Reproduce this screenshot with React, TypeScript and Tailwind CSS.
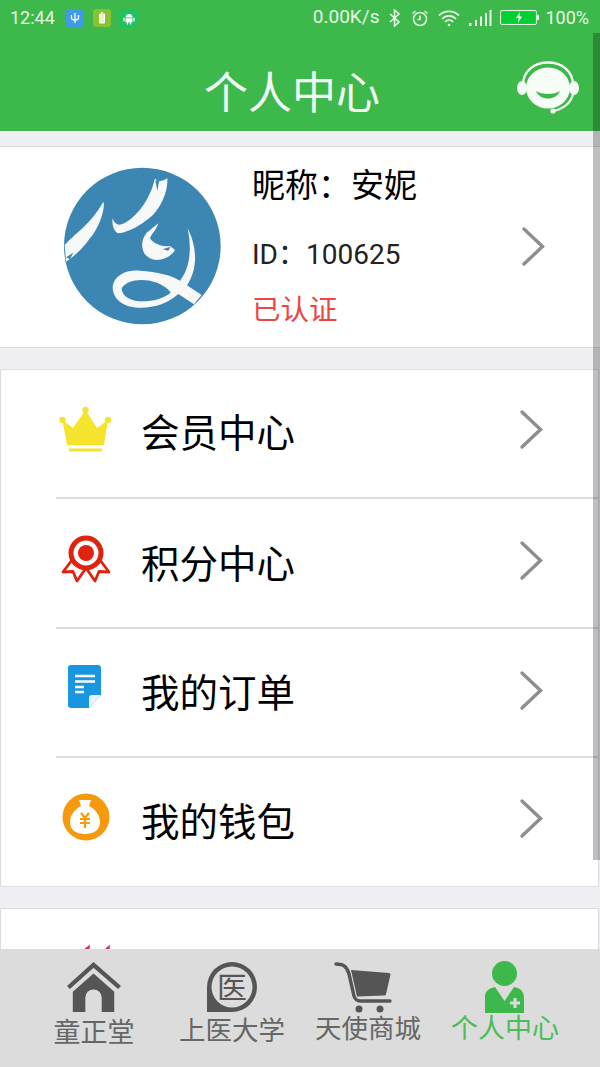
import { ReactNode } from "react";

const cjk = "font-['Noto_Sans_CJK_SC','Noto_Sans',sans-serif]";

const Chevron = () => (
  <svg width="26" height="42" viewBox="0 0 26 42" className="shrink-0">
    <path d="M3 3 L21.500 20.5 L3 38" fill="none" stroke="#8e8e8e" strokeWidth="3.4" strokeLinecap="round" strokeLinejoin="miter" />
  </svg>
);

const StatusTile = ({ color, children }: { color: string; children: ReactNode }) => (
  <div className={`w-[18px] h-[18px] rounded-[3px] flex items-center justify-center ${color}`}>
    <svg width="14" height="14" viewBox="0 0 14 14" fill="#fff" stroke="#fff">
      {children}
    </svg>
  </div>
);

const StatusBar = () => (
  <div className="h-[33px] pt-[2px] flex items-center justify-between pl-[10px] pr-[11px] text-[#e9f7e9] font-['Roboto',sans-serif] text-[18px]">
    <div className="flex items-center">
      <span className="w-[56px]">12:44</span>
      <div className="flex gap-[9px]">
        <StatusTile color="bg-[#3f9be8]">
          <path d="M7 2v10M3.5 4v3c0 1.5 1.5 2 3.5 2s3.500-.5 3.500-2V4" fill="none" strokeWidth="1.300" />
        </StatusTile>
        <StatusTile color="bg-[#86c231]">
          <path d="M4.500 3h5v9h-5z" strokeWidth="1" fill="#e8f5c8" />
          <path d="M6 1.500h2" strokeWidth="1.200" />
        </StatusTile>
        <StatusTile color="bg-[#1fc25e]">
          <path d="M3.500 6.500a3.500 3.500 0 0 1 7 0z" stroke="none" />
          <path d="M3.500 7.200h7v3.600a.7.7 0 0 1-.7.7H4.200a.7.7 0 0 1-.7-.7z" stroke="none" />
          <path d="M2 7v3M12 7v3M5.500 11v2M8.500 11v2" strokeWidth="1.200" strokeLinecap="round" />
        </StatusTile>
      </div>
    </div>
    <div className="flex items-center">
      <span className="mr-[9px] text-[19px]">0.00K/s</span>
      <svg width="14" height="18" viewBox="0 0 14 18" fill="none" stroke="#e9f7e9" strokeWidth="1.600" className="mr-[9px]">
        <path d="M2 5l9 8-4.500 4V1L11 5l-9 8" />
      </svg>
      <svg width="18" height="18" viewBox="0 0 18 18" fill="none" stroke="#e9f7e9" strokeWidth="1.500" className="mr-[9px]">
        <circle cx="9" cy="10" r="6.500" />
        <path d="M9 6.500V10.500H6.500M1.500 4.500L4.500 2M16.500 4.500L13.500 2" />
      </svg>
      <svg width="22" height="18" viewBox="0 0 22 18" fill="none" stroke="#e9f7e9" strokeWidth="1.700" className="mr-[8px]">
        <path d="M1 6.500a14 14 0 0 1 20 0M4 10a9.500 9.500 0 0 1 14 0M7 13a5 5 0 0 1 8 0" />
        <circle cx="11" cy="16" r="1.300" fill="#e9f7e9" stroke="none" />
      </svg>
      <svg width="24" height="18" viewBox="0 0 24 18" fill="#e9f7e9" className="mr-[8px]">
        <rect x="1" y="14" width="2.500" height="3" />
        <rect x="7" y="11" width="2" height="6" />
        <rect x="12" y="7.500" width="2" height="9.500" />
        <rect x="17" y="4" width="2" height="13" />
        <rect x="21.500" y="1" width="2" height="16" />
      </svg>
      <div className="relative w-[37px] h-[15px] border border-[#e9f7e9] rounded-[2px] p-px mr-[8px]">
        <div className="h-full w-full bg-[#00d130] flex items-center justify-center">
          <svg width="8" height="11" viewBox="0 0 8 11" fill="#fff">
            <path d="M5 0L1 6h2.500L3 11l4-6.500H4.500z" />
          </svg>
        </div>
        <div className="absolute -right-[3px] top-[4px] w-[2px] h-[5px] bg-[#e9f7e9]" />
      </div>
      <span>100%</span>
    </div>
  </div>
);

const Header = () => (
  <div className="h-[98px] relative flex items-center justify-center pt-[16px] pr-[16px]">
    <h1 className={`${cjk} font-normal text-[44px] leading-none text-[#f4fbf4]`}>个人中心</h1>
    <svg width="66" height="54" viewBox="0 0 66 54" className="absolute left-[515px] top-[28px]">
      <path d="M8 24 C8 -6 58 -6 58 24" fill="none" stroke="#f6fcf6" strokeWidth="2.300" />
      <ellipse cx="33" cy="27" rx="22" ry="20.500" fill="#f6fcf6" />
      <ellipse cx="7" cy="27" rx="5" ry="7" fill="#f6fcf6" />
      <ellipse cx="59" cy="27" rx="5" ry="7" fill="#f6fcf6" />
      <path d="M21 30 C25 40 41 40 45 30 C39 34 27 34 21 30Z" fill="#3cb94a" />
      <path d="M58 33 C56 42 50 47 39 50" fill="none" stroke="#f6fcf6" strokeWidth="2.200" />
      <circle cx="38" cy="50" r="2.600" fill="#f6fcf6" />
    </svg>
  </div>
);

const Avatar = () => (
  <svg width="200" height="190" viewBox="0 0 600 570" className="shrink-0 -mt-[4px]">
    <circle cx="307" cy="288" r="235" fill="#3b86b3" />
    <g fill="#f7f8f8">
      <path d="M74 285 C110 245 150 225 190 155 C197 170 180 230 150 265 C125 300 100 320 78 335 Z" />
      <path d="M218 205 C228 235 250 225 275 205 C310 175 335 130 345 85 C352 100 370 92 382 85 C385 130 355 190 320 210 C290 235 250 250 235 250 C222 245 215 225 218 205Z" />
      <path d="M355 220 C350 240 335 250 330 265 C340 282 370 292 390 288 L405 300 C390 325 350 340 325 322 C305 310 298 275 320 248 Z" />
      <path
        fillRule="evenodd"
        d="M218 410 C222 375 260 358 300 362 C350 365 395 375 425 395 L485 435 L462 463 L415 432 C385 460 340 475 295 473 C245 470 218 445 218 410Z M245 415 C255 395 290 385 330 392 C360 398 385 415 392 428 C365 450 320 458 285 452 C260 447 245 432 245 415Z"
      />
      <path d="M443 235 C468 285 478 350 440 408 L420 392 C445 360 458 310 443 235Z" />
    </g>
    <g fill="#3b86b3">
      <path d="M346 92 L358 90 L352 122Z" />
      <path d="M78 322 L100 308 L90 328Z" />
      <path d="M368 298 L392 290 L385 302Z" />
    </g>
  </svg>
);

const Crown = () => (
  <svg width="56" height="48" viewBox="0 0 56 48">
    <g fill="#f5e42e">
      <circle cx="4.500" cy="15" r="3.200" />
      <circle cx="27.500" cy="5" r="3.200" />
      <circle cx="50" cy="15" r="3.200" />
      <path d="M4.500 15L15 23 27.500 5 39 23 50 15 46 40H9z" />
      <rect x="11" y="43.500" width="33" height="3" />
    </g>
  </svg>
);

const Medal = () => (
  <svg width="50" height="48" viewBox="0 0 50 48">
    <path d="M11 25L2 37l10-.5 4 9.500 9-13M39 25l9 12-10-.5-4 9.500-9-13" fill="#fff" stroke="#e0230f" strokeWidth="2.800" strokeLinejoin="round" />
    <circle cx="25" cy="18" r="15" fill="#fff" stroke="#e0230f" strokeWidth="5" />
    <circle cx="25" cy="18" r="8" fill="#e0230f" />
  </svg>
);

const Doc = () => (
  <svg width="36" height="46" viewBox="0 0 36 46">
    <path d="M3 0h27a3 3 0 0 1 3 3v27L21 43H3a3 3 0 0 1-3-3V3a3 3 0 0 1 3-3z" fill="#1a96e1" />
    <path d="M7 11h20M7 16.500h20M7 22h9M7 27h9" stroke="#fff" strokeWidth="2.300" />
    <path d="M33 30h-9a3 3 0 0 0-3 3v10z" fill="#e6f3fb" />
  </svg>
);

const MoneyBag = () => (
  <svg width="48" height="48" viewBox="0 0 48 48">
    <circle cx="24" cy="24" r="23.500" fill="#f59a0c" />
    <path d="M17 7h12l-2 6c6 3 11 9 11 16 0 8-6 12-15 12S8 37 8 29c0-7 5-13 11-16z" fill="#fff" />
    <path d="M19 20l4 5 4-5M18 26h10M18 30h10M23 25v10" fill="none" stroke="#f59a0c" strokeWidth="2.200" />
  </svg>
);

const Home = () => (
  <svg width="54" height="52" viewBox="0 0 56 52" fill="#555">
    <path d="M0 25L27.500 0 56 25l-3 3L27.500 6 3 28z" />
    <path d="M6 31L27.500 12 49 31v21H36V37a8 8 0 0 0-17 0v15H6z" />
  </svg>
);

const Clinic = () => (
  <svg width="52" height="52" viewBox="0 0 52 52">
    <path d="M1 51V26a25 25 0 1 1 25 25z" fill="#555" />
    <circle cx="26" cy="26" r="20.500" fill="#dcdcdc" />
    <text x="26" y="37" textAnchor="middle" fontSize="30" fill="#555" fontFamily="Noto Sans CJK SC">医</text>
  </svg>
);

const Cart = () => (
  <svg width="58" height="52" viewBox="0 0 58 52">
    <path d="M2 3c8 0 11 3 13 10l5 22c1 3 3 5 6 5h30" fill="none" stroke="#555" strokeWidth="3.400" strokeLinecap="round" />
    <path d="M17 9l38 3c1 0 1.500 1 1.400 2L52 33c0 1-1 1.500-2 1.500l-27 1z" fill="#555" />
    <circle cx="25" cy="48" r="3.500" fill="#555" />
    <circle cx="46" cy="48" r="3.500" fill="#555" />
  </svg>
);

const Doctor = () => (
  <svg width="42" height="52" viewBox="0 0 42 52">
    <circle cx="20.500" cy="12.500" r="12.500" fill="#3cb94a" />
    <path d="M11 26L20.500 40 30 26c6 1 10 4 10 11v15H1V36c0-6 4-9 10-10z" fill="#3cb94a" />
    <path d="M31 37v10M26 42h10" stroke="#dcdcdc" strokeWidth="3" />
  </svg>
);

const rows = [
  { label: "会员中心", icon: <Crown />, iconClass: "pl-[57px] pb-[9px]", height: "h-[129px]", gap: "w-[27px]", nudge: "mb-[2px]", border: true },
  { label: "积分中心", icon: <Medal />, iconClass: "pl-[60px] pb-[6px]", height: "h-[130px]", gap: "w-[30px]", nudge: "mb-[4px]", border: true },
  { label: "我的订单", icon: <Doc />, iconClass: "pl-[67px] pb-[6px]", height: "h-[129px]", gap: "w-[37px]", nudge: "mb-[6px]", border: true },
  { label: "我的钱包", icon: <MoneyBag />, iconClass: "pl-[61px] pb-[6px]", height: "h-[128px]", gap: "w-[31px]", nudge: "mb-[4px]", border: false },
];

const tabs = [
  { label: "童正堂", icon: <Home />, iconClass: "", width: "w-[140px]", text: "text-[27px] text-[#666]" },
  { label: "上医大学", icon: <Clinic />, iconClass: "", width: "w-[136px]", text: "text-[26.500px] text-[#666] -mt-[2px]" },
  { label: "天使商城", icon: <Cart />, iconClass: "-ml-[10px]", width: "w-[136px]", text: "text-[26.500px] text-[#666] -mt-[4px]" },
  { label: "个人中心", icon: <Doctor />, iconClass: "", width: "w-[138px]", text: "text-[27px] text-[#4cbc5a] -mt-[4px]" },
];

export default function App() {
  return (
    <div className={`relative w-[600px] h-[1067px] overflow-hidden flex flex-col bg-[#efeff4] ${cjk}`}>
      <div className="bg-[#3cb94a] shrink-0">
        <StatusBar />
        <Header />
      </div>

      <div className="flex-1 min-h-0 overflow-hidden pt-[15px]">
        <div className="h-[202px] bg-white border-y border-[#dcdcdc] flex items-center pl-[40px] pr-[53px]">
          <Avatar />
          <div className="ml-[12px] flex-1 pt-[2px] pb-[10px] text-black">
            <div className="text-[33px] leading-[48px]">{"昵称\uFF1A安妮"}</div>
            <div className="text-[28px] leading-[44px] mt-[26px] text-[#222] font-['Roboto','Noto_Sans_CJK_SC',sans-serif]">{"ID\uFF1A100625"}</div>
            <div className="text-[28.500px] leading-[40px] mt-[11px] text-[#ee4444]">已认证</div>
          </div>
          <Chevron />
        </div>

        <div className="mt-[21px] bg-white border border-[#dcdcdc] mr-px">
          {rows.map((row) => (
            <div key={row.label} className={`${row.height} flex items-center relative ${row.iconClass} pr-[53px]`}>
              <div className={`flex ${row.nudge}`}>{row.icon}</div>
              <div className={`shrink-0 ${row.gap}`} />
              <span className="flex-1 text-[38.500px] leading-none text-black">{row.label}</span>
              <Chevron />
              {row.border && <div className="absolute left-[55px] right-0 bottom-0 h-[2px] bg-[#dcdcdc]" />}
            </div>
          ))}
        </div>

        <div className="mt-[21px] h-[120px] bg-white border border-[#dcdcdc] mr-px pl-[76px] pt-[36px]">
          <svg width="40" height="30" viewBox="0 0 40 30" fill="#d8307e">
            <path d="M5 8C7 3 11 1 13 0c0 4-1 7-2 8zM26 8c2-5 5-7 7-8 0 4-1 7-2 8z" />
          </svg>
        </div>
      </div>

      <div className="h-[118px] shrink-0 bg-[#dcdcdc] flex items-start pl-[24px]">
        {tabs.map((tab) => (
          <div key={tab.label} className={`${tab.width} flex flex-col items-center pt-[12px]`}>
            <div className={`h-[52px] flex items-end ${tab.iconClass}`}>{tab.icon}</div>
            <span className={`${tab.text} leading-[36px] whitespace-nowrap`}>{tab.label}</span>
          </div>
        ))}
      </div>

      {/* scroll indicator */}
      <div className="absolute right-0 top-[33px] w-[7px] h-[827px] bg-black/25" />
    </div>
  );
}
